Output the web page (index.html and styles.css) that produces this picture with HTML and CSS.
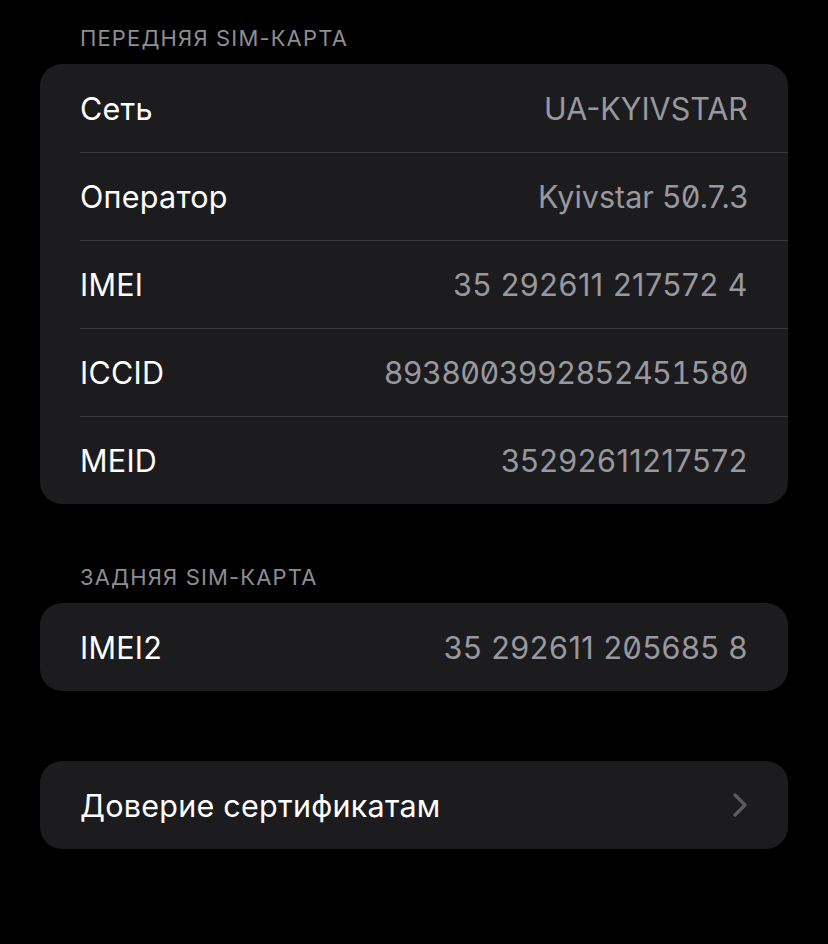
FILE: index.html
```html
<!DOCTYPE html>
<html lang="ru">
<head>
<meta charset="utf-8">
<title>SIM</title>
<link rel="stylesheet" href="styles.css">
</head>
<body>
<div class="page">
  <div class="section-header">ПЕРЕДНЯЯ SIM-КАРТА</div>
  <div class="card">
    <div class="row"><span class="label">Сеть</span><span class="value">UA-KYIVSTAR</span></div>
    <div class="row"><span class="label">Оператор</span><span class="value">Kyivstar 50.7.3</span></div>
    <div class="row"><span class="label">IMEI</span><span class="value num">35 292611 217572 4</span></div>
    <div class="row"><span class="label">ICCID</span><span class="value mono">8938003992852451580</span></div>
    <div class="row"><span class="label">MEID</span><span class="value num">35292611217572</span></div>
  </div>

  <div class="section-header second">ЗАДНЯЯ SIM-КАРТА</div>
  <div class="card">
    <div class="row"><span class="label">IMEI2</span><span class="value num">35 292611 205685 8</span></div>
  </div>

  <div class="card third">
    <div class="row"><span class="label">Доверие сертификатам</span>
      <svg class="chevron" width="16" height="24" viewBox="0 0 16 24"><path d="M3 2 L13 12 L3 22" fill="none" stroke="#5b5b60" stroke-width="3.2" stroke-linecap="round" stroke-linejoin="round"/></svg>
    </div>
  </div>
</div>
</body>
</html>
```

FILE: styles.css
```css
html, body {
  margin: 0;
  padding: 0;
  background: #000;
}
body {
  font-family: Inter, "Noto Sans", "DejaVu Sans", sans-serif;
  color: #fff;
  width: 828px;
  height: 944px;
  overflow: hidden;
}
.page {
  padding: 23px 40px 0 40px;
}
.section-header {
  padding: 0 40px;
  font-size: 22px;
  line-height: 30px;
  color: #8d8d93;
  letter-spacing: 1.15px;
  margin-bottom: 11px;
}
.section-header.second {
  margin-top: 58px;
}
.card {
  background: #1c1c1e;
  border-radius: 22px;
  overflow: hidden;
}
.card.third {
  margin-top: 70px;
}
.row {
  position: relative;
  height: 88px;
  display: flex;
  align-items: center;
  justify-content: space-between;
  padding: 0 40px;
  font-size: 30.5px;
}
.row + .row::before {
  content: "";
  position: absolute;
  top: 0;
  left: 40px;
  right: 0;
  height: 1px;
  background: #3a3a3c;
}
.label {
  color: #fff;
  letter-spacing: 0.25px;
}
.value {
  color: #98989e;
  letter-spacing: 0;
  font-feature-settings: "zero" 1;
}
.value.num {
  letter-spacing: 0.55px;
}
.value.mono {
  letter-spacing: -0.6px;
  font-feature-settings: "zero" 1, "tnum" 1;
}
.chevron {
  display: block;
}
```
